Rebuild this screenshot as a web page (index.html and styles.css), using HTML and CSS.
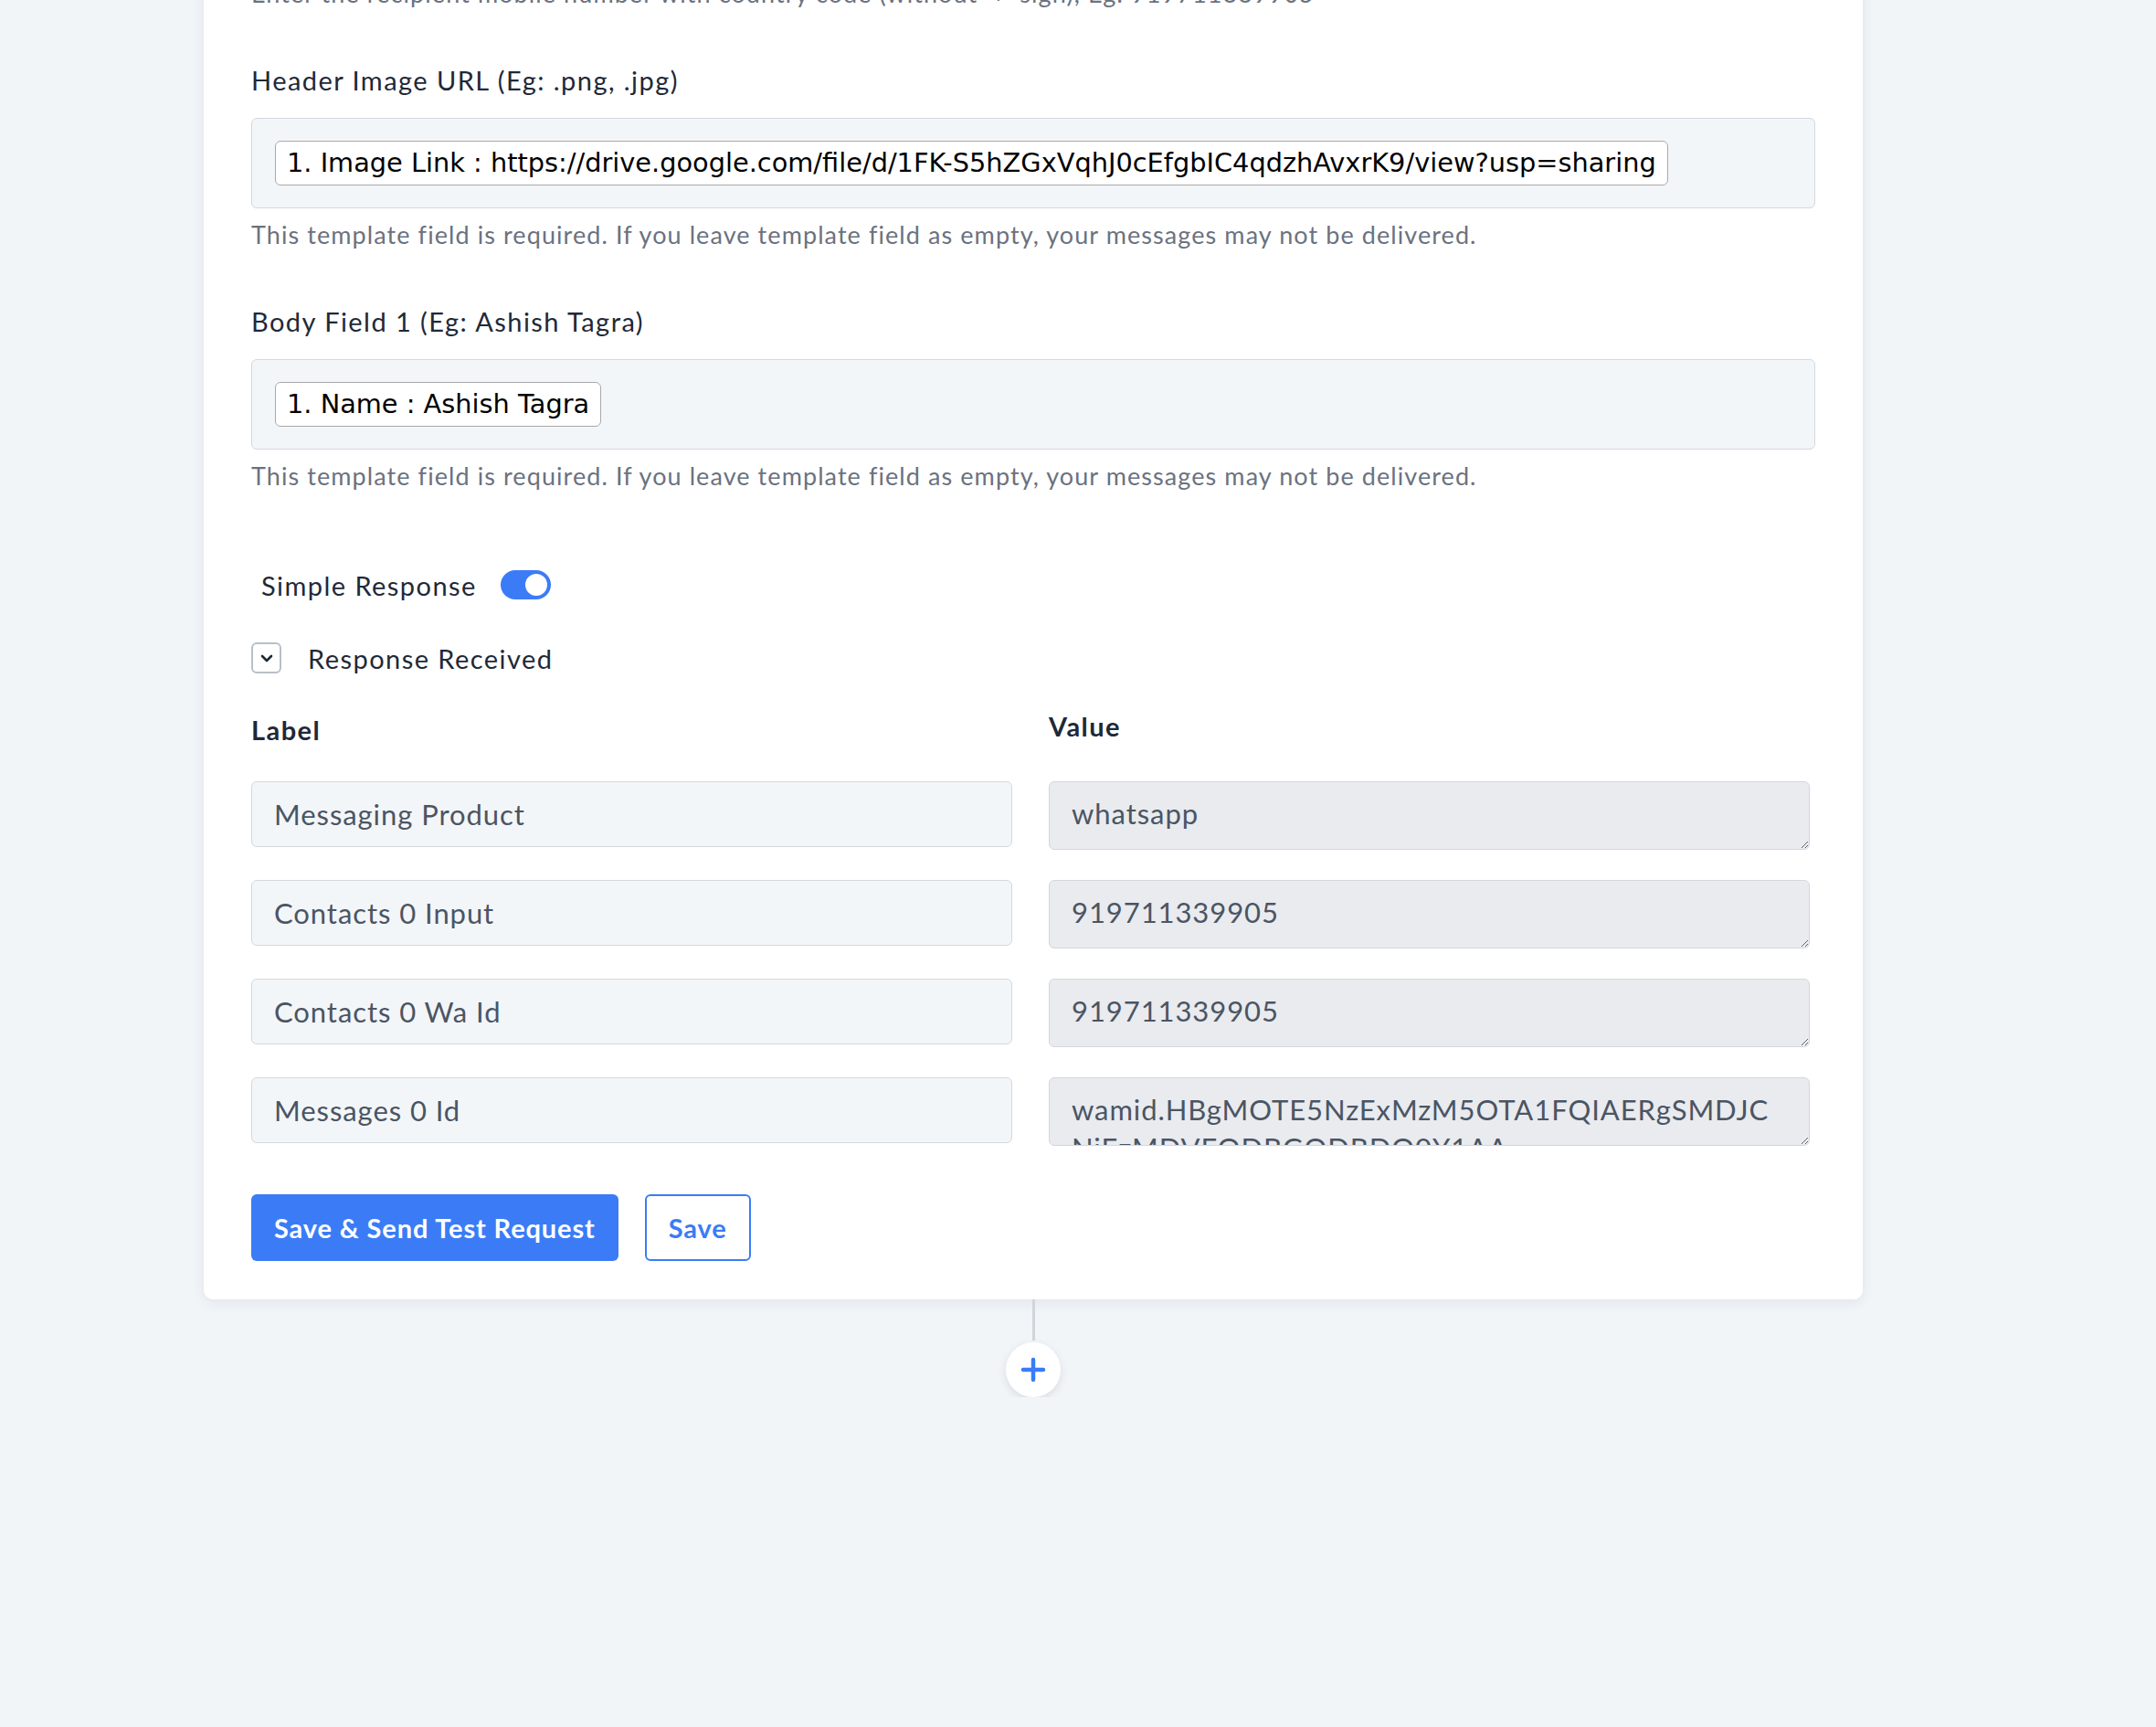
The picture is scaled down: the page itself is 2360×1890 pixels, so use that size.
FILE: index.html
```html
<!DOCTYPE html>
<html lang="en">
<head>
  <meta charset="UTF-8">
  <meta name="viewport" content="width=device-width, initial-scale=1.0">
  <title>WhatsApp Template Step</title>
  <link rel="stylesheet" href="styles.css">
</head>
<body>
  <main class="canvas">
    <section class="card">
      <p class="hint hint-top">Enter the recipient mobile number with country code (without '+' sign), Eg: 919711339905</p>

      <div class="field">
        <label class="field-label">Header Image URL (Eg: .png, .jpg)</label>
        <div class="token-box">
          <span class="token">1. Image Link : https://drive.google.com/file/d/1FK-S5hZGxVqhJ0cEfgbIC4qdzhAvxrK9/view?usp=sharing</span>
        </div>
        <p class="hint">This template field is required. If you leave template field as empty, your messages may not be delivered.</p>
      </div>

      <div class="field">
        <label class="field-label">Body Field 1 (Eg: Ashish Tagra)</label>
        <div class="token-box">
          <span class="token">1. Name : Ashish Tagra</span>
        </div>
        <p class="hint">This template field is required. If you leave template field as empty, your messages may not be delivered.</p>
      </div>

      <div class="switch-row">
        <span>Simple Response</span>
        <span class="switch on"><span class="knob"></span></span>
      </div>

      <div class="collapse-row">
        <button class="chevron-btn" type="button">
          <svg width="14" height="9" viewBox="0 0 14 9"><path d="M2 2l5 5 5-5" fill="none" stroke="#1f2937" stroke-width="2.6" stroke-linecap="round" stroke-linejoin="round"/></svg>
        </button>
        <span>Response Received</span>
      </div>

      <div class="map-grid">
        <div class="col-head col-head-key">Label</div>
        <div class="col-head">Value</div>

        <input class="map-key" type="text" value="Messaging Product" readonly>
        <textarea class="map-val" readonly>whatsapp</textarea>

        <input class="map-key" type="text" value="Contacts 0 Input" readonly>
        <textarea class="map-val" readonly>919711339905</textarea>

        <input class="map-key" type="text" value="Contacts 0 Wa Id" readonly>
        <textarea class="map-val" readonly>919711339905</textarea>

        <input class="map-key" type="text" value="Messages 0 Id" readonly>
        <textarea class="map-val" readonly>wamid.HBgMOTE5NzExMzM5OTA1FQIAERgSMDJCNjEzMDVEODBGODBDQ0Y1AA==</textarea>
      </div>

      <div class="actions">
        <button class="btn btn-primary" type="button">Save &amp; Send Test Request</button>
        <button class="btn btn-outline" type="button">Save</button>
      </div>
    </section>

    <div class="connector"></div>
    <button class="add-step" type="button">
      <svg width="28" height="28" viewBox="0 0 28 28"><path d="M14 3v22M3 14h22" stroke="#3b7cf6" stroke-width="4.5" stroke-linecap="round"/></svg>
    </button>
  </main>
</body>
</html>
```

FILE: styles.css
```css
body { margin: 0; background: #f2f5f8; font-family: Lato, "Noto Sans", sans-serif; color: #1f2937; }

.canvas {
  width: 1816px;
  margin-left: 223px;
  display: flex;
  flex-direction: column;
  align-items: center;
}

.card {
  align-self: stretch;
  margin-top: -25px;
  padding: 0 52px 42px;
  background: #fff;
  border-radius: 0 0 10px 10px;
  box-shadow: 0 4px 14px rgba(30, 41, 59, 0.08);
}

.hint {
  margin: 11px 0 0;
  font-size: 27px;
  letter-spacing: 0.04em;
  line-height: 36px;
  color: #6b7280;
}
.hint-top { margin: 0; }

.field { margin-top: 57px; }
.field-label {
  display: block;
  font-size: 29px;
  letter-spacing: 0.05em;
  line-height: 40px;
  margin-bottom: 21px;
}

.token-box {
  background: #f3f6f9;
  border: 1px solid #d3d8de;
  border-radius: 6px;
  padding: 24px 25px;
}
.token {
  display: inline-block;
  padding: 7px 12px;
  border: 1px solid #a9a9a9;
  border-radius: 6px;
  background: #fff;
  font-family: "DejaVu Sans", Verdana, sans-serif;
  font-size: 28.8px;
  line-height: 33px;
  color: #000;
}

/* toggle */
.switch-row {
  display: flex;
  align-items: center;
  gap: 26px;
  height: 40px;
  margin-top: 81px;
  padding-left: 11px;
  font-size: 29px;
  letter-spacing: 0.05em;
}
.switch {
  position: relative;
  width: 55px;
  height: 32px;
  border-radius: 16px;
  background: #c7ccd4;
}
.switch.on { background: #3b7cf6; }
.knob {
  position: absolute;
  top: 4px;
  left: 4px;
  width: 24px;
  height: 24px;
  border-radius: 50%;
  background: #fff;
}
.switch.on .knob { left: 27px; }

.collapse-row {
  display: flex;
  align-items: center;
  gap: 29px;
  height: 40px;
  margin-top: 40px;
  font-size: 29px;
  letter-spacing: 0.05em;
}
.chevron-btn {
  width: 33px;
  height: 34px;
  padding: 0;
  display: flex;
  align-items: center;
  justify-content: center;
  background: #fff;
  border: 2px solid #b9bfc9;
  border-radius: 6px;
}

/* label / value mapping */
.map-grid {
  display: grid;
  grid-template-columns: 833px 833px;
  grid-template-rows: 40px;
  grid-auto-rows: 72px;
  column-gap: 40px;
  row-gap: 36px;
  margin-top: 39px;
}
.col-head {
  font-size: 29px;
  font-weight: 700;
  letter-spacing: 0.05em;
  line-height: 32px;
}
.col-head-key { padding-top: 4px; }

.map-key, .map-val {
  box-sizing: border-box;
  width: 100%;
  margin: 0;
  border: 1px solid #d3d8de;
  border-radius: 6px;
  font-family: Lato, "Noto Sans", sans-serif;
  font-size: 31px;
  letter-spacing: 0.03em;
  color: #4b5563;
  outline: none;
}
.map-key {
  height: 72px;
  padding: 0 24px;
  background: #f3f6f9;
}
.map-val {
  height: 75px;
  padding: 13px 24px 0;
  line-height: 42px;
  background: #e9ebef;
  overflow: hidden;
  word-break: break-all;
}

.actions {
  display: flex;
  gap: 29px;
  margin-top: 56px;
}
.btn {
  height: 73px;
  border-radius: 6px;
  font-family: Lato, "Noto Sans", sans-serif;
  font-size: 29px;
  font-weight: 700;
  letter-spacing: 0.03em;
  cursor: pointer;
}
.btn-primary {
  padding: 0 25px;
  background: #3b7cf6;
  border: none;
  color: #fff;
}
.btn-outline {
  padding: 0 24px;
  background: #fff;
  border: 2px solid #3b7cf6;
  color: #3b7cf6;
}

.connector {
  width: 3px;
  height: 45px;
  background: #cfd5dd;
}
.add-step {
  width: 60px;
  height: 60px;
  margin-top: 2px;
  padding: 0;
  display: flex;
  align-items: center;
  justify-content: center;
  background: #fff;
  border: none;
  border-radius: 50%;
  box-shadow: 0 3px 10px rgba(30, 41, 59, 0.12);
}
```
